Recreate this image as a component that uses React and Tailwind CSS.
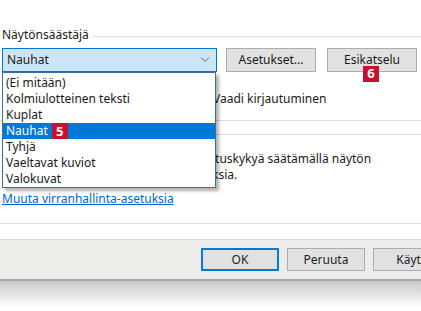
import React from 'react';

const items = ['(Ei mitään)', 'Kolmiulotteinen teksti', 'Kuplat', 'Nauhat', 'Tyhjä', 'Vaeltavat kuviot', 'Valokuvat'];

const Badge = ({ n }) => (
  <span className="inline-flex items-center justify-center w-4 h-4 bg-[#c8102e] text-white text-[13px] font-bold leading-none">
    {n}
  </span>
);

const Button = ({ children, focused }) => (
  <button
    className={
      'shrink-0 h-[23px] w-[78px] text-[12px] text-[#1e1e1e] bg-[#e1e1e1] ' +
      (focused ? 'border-2 border-[#0078d7]' : 'border border-[#adadad]')
    }
  >
    {children}
  </button>
);

export default function App() {
  return (
    <div
      className="relative w-[421px] h-[311px] overflow-hidden bg-white text-[12px] text-[#1a1a1a]"
      style={{ fontFamily: '"Noto Sans", "Open Sans", sans-serif' }}
    >
      {/* screensaver group */}
      <div className="pt-[27px] flex items-center">
        <span className="pl-[2px] leading-4">Näytönsäästäjä</span>
        <div className="flex-1 h-px bg-[#dcdcdc] ml-1 mt-[2px]" />
      </div>

      <div className="mt-[5px] flex items-center">
        <div className="ml-[2px] w-[215px] h-[24px] border border-[#0078d7] bg-[#cde6f7] flex items-center justify-between pl-[4px] pr-[6px]">
          <span>Nauhat</span>
          <svg width="10" height="6" viewBox="0 0 10 6" fill="none" stroke="#606060" strokeWidth="1">
            <path d="M1 0.5 L5 4.5 L9 0.5" />
          </svg>
        </div>
        <button className="ml-[9px] h-[24px] w-[90px] bg-[#e1e1e1] border border-[#adadad] text-[12px]">Asetukset...</button>
        <div className="relative ml-[11px]">
          <button className="h-[24px] w-[90px] bg-[#e1e1e1] border border-[#adadad] text-[12px]">Esikatselu</button>
          <div className="absolute left-[36px] top-[17px]">
            <Badge n="6" />
          </div>
        </div>
      </div>

      <div className="mt-[19px] h-4 leading-4 pl-[213px]">Vaadi kirjautuminen</div>

      <div className="mt-[13px] h-px bg-[#dcdcdc]" />
      <div className="mt-[13px] h-px bg-[#dcdcdc]" />

      <div className="mt-[16px] pl-[212px] leading-4">
        <div>ituskykyä säätämällä näytön</div>
        <div>ksia.</div>
      </div>

      <div className="mt-[8px] pl-[2px] h-4 leading-4">
        <span className="text-[#0066cc] underline">Muuta virranhallinta-asetuksia</span>
      </div>

      <div className="mt-[16px] h-px bg-[#e0e0e0]" />

      {/* footer */}
      <div className="mt-[15px] h-[40px] bg-[#ececea] border-t border-[#d8d8d8] flex items-center pl-[201px] gap-[8px] overflow-hidden">
        <Button focused>OK</Button>
        <Button>Peruuta</Button>
        <Button>Käytä</Button>
      </div>
      <div className="h-[2px] bg-[#a8a8a8]" />
      <div className="h-[26px] bg-gradient-to-b from-[#c8c8c8] to-white" />

      {/* open dropdown list */}
      <div className="absolute left-[2px] top-[72px] w-[214px] border border-[#3d6f9e] bg-white shadow-[3px_3px_3px_rgba(0,0,0,0.3)] pt-[2px]">
        {items.map((it) => (
          <div
            key={it}
            className={
              'h-[16px] leading-4 pl-[3px] flex items-center gap-[4px] ' +
              (it === 'Nauhat' ? 'bg-[#0078d7] text-white' : '')
            }
          >
            <span>{it}</span>
            {it === 'Nauhat' && <Badge n="5" />}
          </div>
        ))}
      </div>
    </div>
  );
}
